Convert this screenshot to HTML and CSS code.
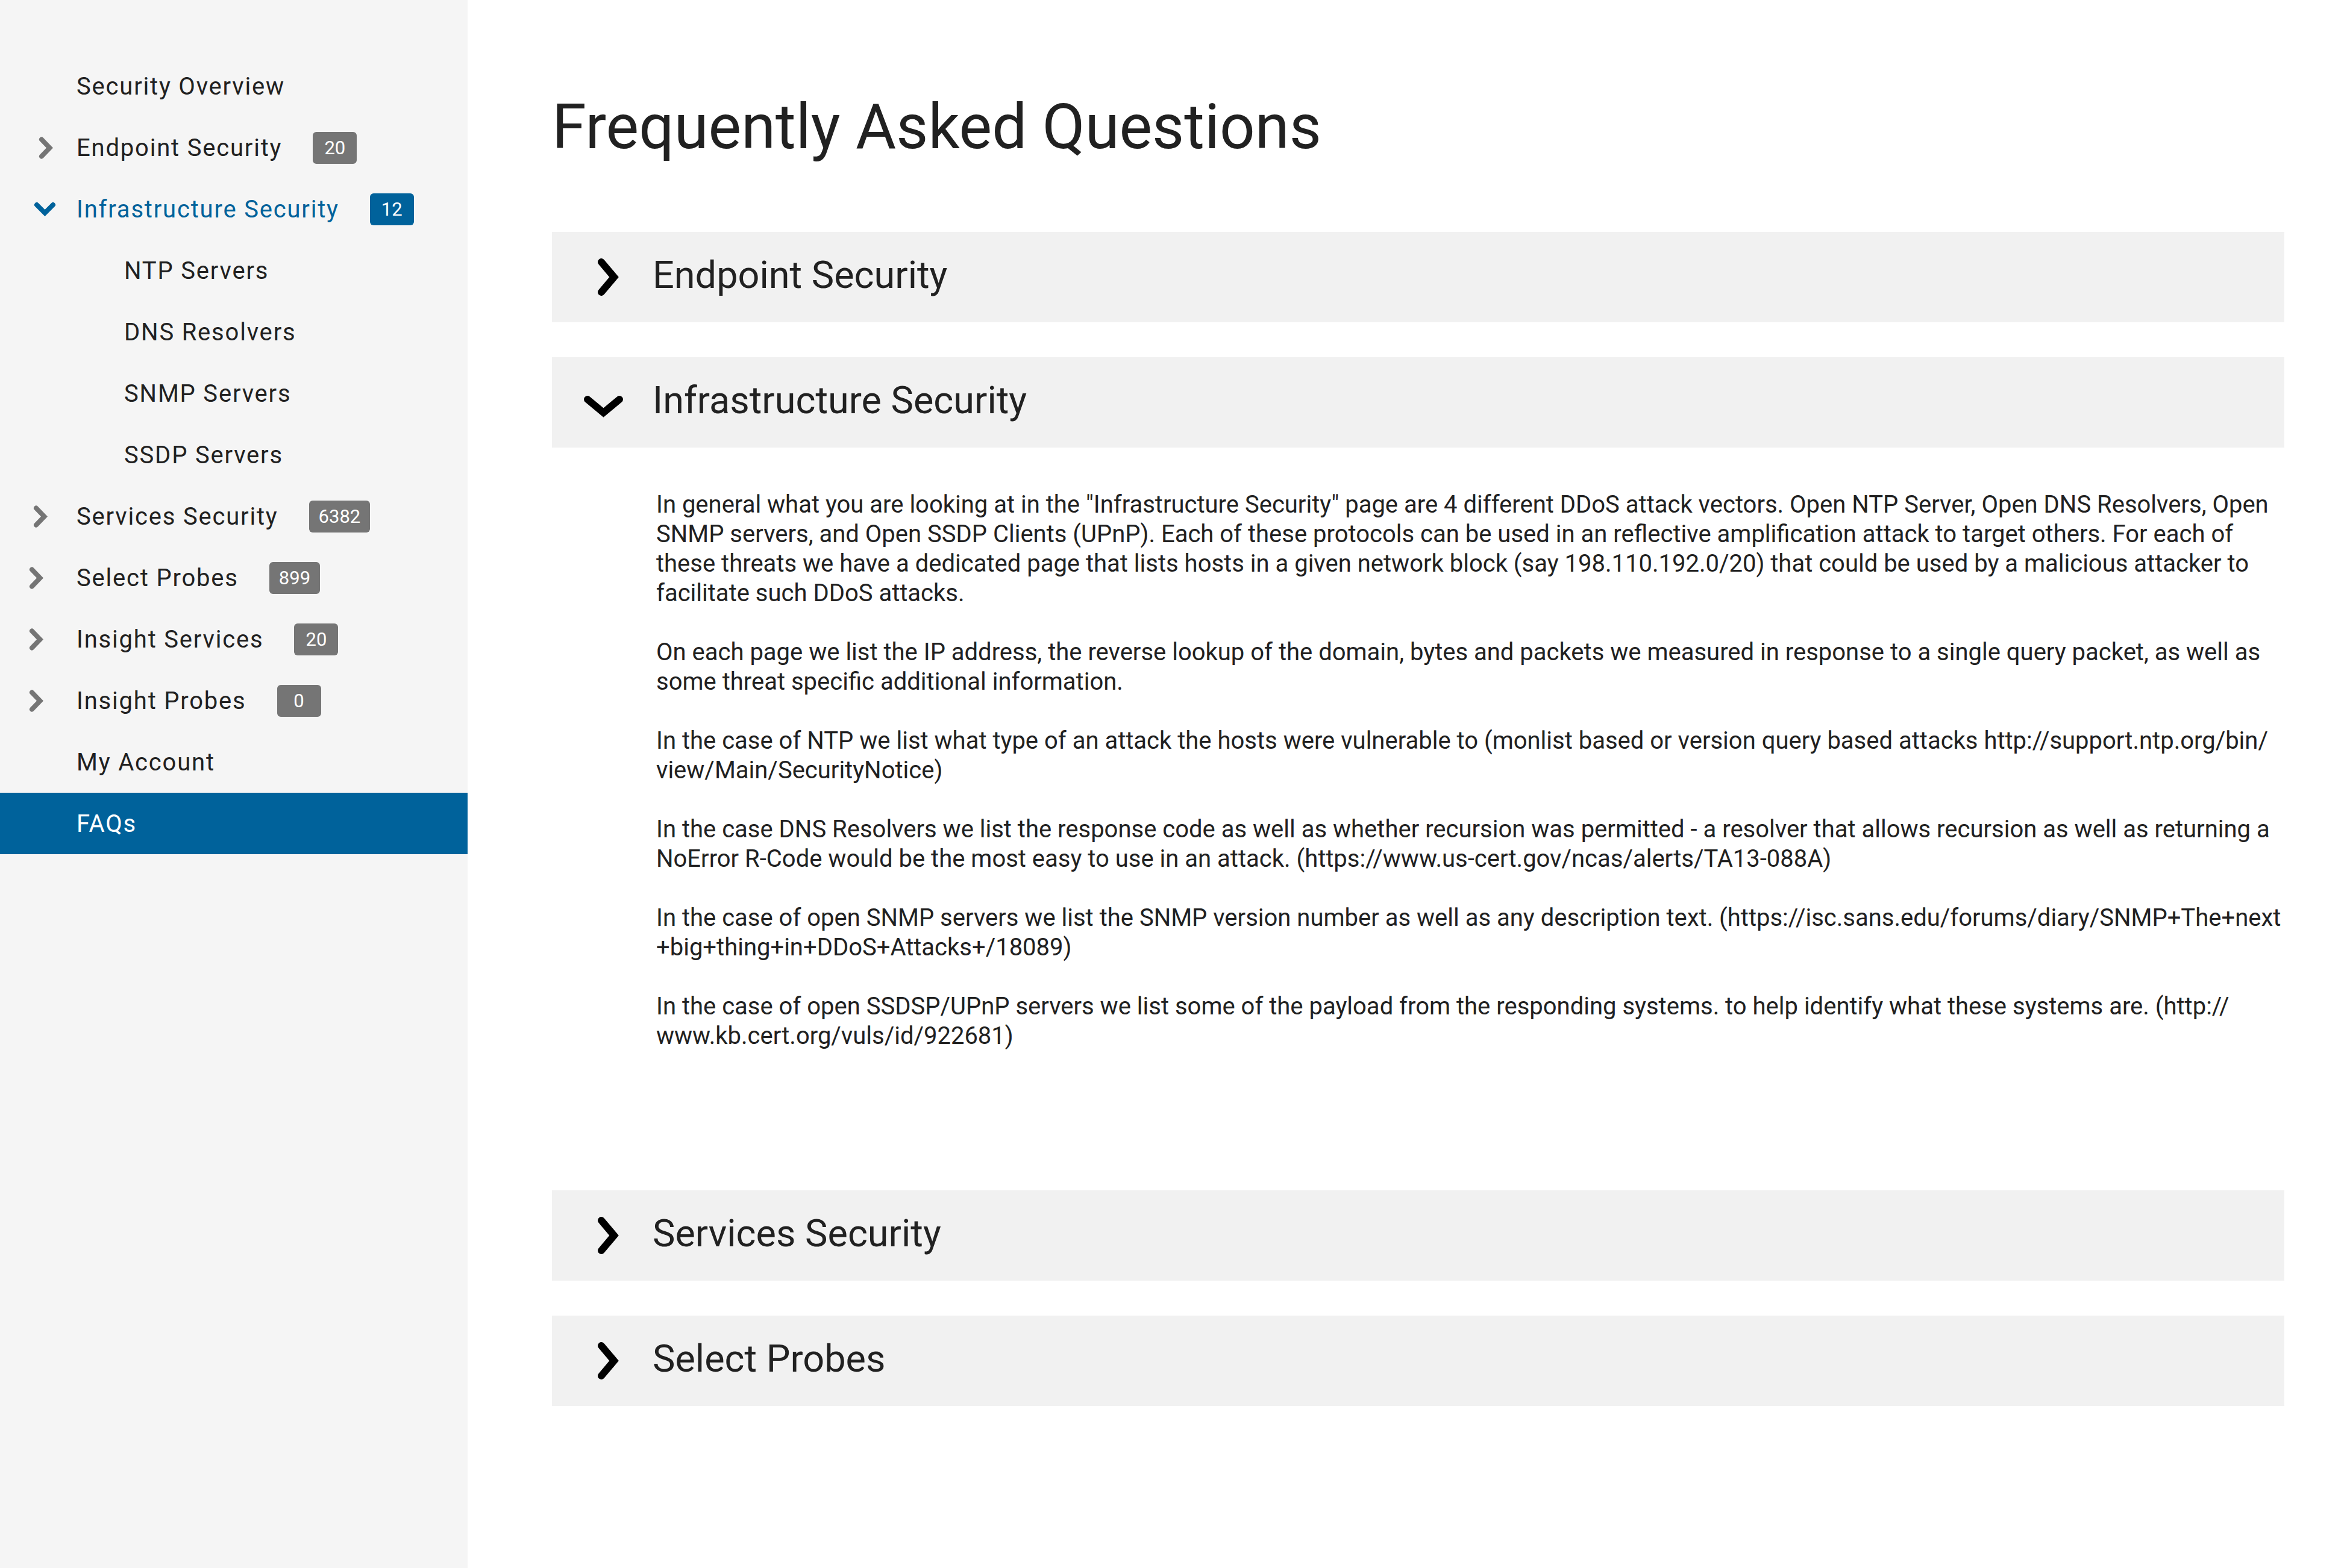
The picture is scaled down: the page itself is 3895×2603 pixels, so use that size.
FILE: index.html
```html
<!DOCTYPE html>
<html lang="en">
<head>
<meta charset="utf-8">
<title>Frequently Asked Questions</title>
<link rel="stylesheet" href="styles.css">
</head>
<body>
<div class="layout">
  <nav class="sidebar">
    <ul class="nav">
      <li class="nav-item"><span class="slot"></span><span class="label">Security Overview</span></li>
      <li class="nav-item"><span class="slot"><svg class="chev chev-a" width="25" height="37" viewBox="0 0 25 37"><polyline points="6,4.5 19.5,18.5 6,32.5"/></svg></span><span class="label">Endpoint Security</span><span class="badge">20</span></li>
      <li class="nav-item is-open"><span class="slot"><svg class="chev-down" width="37" height="24" viewBox="0 0 37 24"><polyline points="5,5 18.5,18.5 32,5"/></svg></span><span class="label">Infrastructure Security</span><span class="badge badge-blue">12</span></li>
      <li class="nav-item sub"><span class="slot"></span><span class="label">NTP Servers</span></li>
      <li class="nav-item sub"><span class="slot"></span><span class="label">DNS Resolvers</span></li>
      <li class="nav-item sub"><span class="slot"></span><span class="label">SNMP Servers</span></li>
      <li class="nav-item sub"><span class="slot"></span><span class="label">SSDP Servers</span></li>
      <li class="nav-item"><span class="slot"><svg class="chev chev-b" width="25" height="37" viewBox="0 0 25 37"><polyline points="6,4.5 19.5,18.5 6,32.5"/></svg></span><span class="label">Services Security</span><span class="badge">6382</span></li>
      <li class="nav-item"><span class="slot"><svg class="chev chev-c" width="25" height="37" viewBox="0 0 25 37"><polyline points="6,4.5 19.5,18.5 6,32.5"/></svg></span><span class="label">Select Probes</span><span class="badge">899</span></li>
      <li class="nav-item"><span class="slot"><svg class="chev chev-c" width="25" height="37" viewBox="0 0 25 37"><polyline points="6,4.5 19.5,18.5 6,32.5"/></svg></span><span class="label">Insight Services</span><span class="badge">20</span></li>
      <li class="nav-item"><span class="slot"><svg class="chev chev-c" width="25" height="37" viewBox="0 0 25 37"><polyline points="6,4.5 19.5,18.5 6,32.5"/></svg></span><span class="label">Insight Probes</span><span class="badge">0</span></li>
      <li class="nav-item"><span class="slot"></span><span class="label">My Account</span></li>
      <li class="nav-item current"><span class="slot"></span><span class="label">FAQs</span></li>
    </ul>
  </nav>

  <main class="main">
    <h1 class="title">Frequently Asked Questions</h1>
    <div class="faq">
      <div class="faq-item">
        <div class="faq-head">
          <span class="faq-icon"><svg width="70" height="70" viewBox="0 0 70 70"><polyline points="32,10 53,35 32,60"/></svg></span>
          <span class="faq-title">Endpoint Security</span>
        </div>
      </div>
      <div class="faq-item">
        <div class="faq-head">
          <span class="faq-icon"><svg width="70" height="70" viewBox="0 0 70 70"><polyline points="9,30 35.5,52 62,30"/></svg></span>
          <span class="faq-title">Infrastructure Security</span>
        </div>
        <div class="faq-body">
          <p>In general what you are looking at in the "Infrastructure Security" page are 4 different DDoS attack vectors. Open NTP Server, Open DNS Resolvers, Open SNMP servers, and Open SSDP Clients (UPnP). Each of these protocols can be used in an reflective amplification attack to target others. For each of these threats we have a dedicated page that lists hosts in a given network block (say 198.110.192.0/20) that could be used by a malicious attacker to facilitate such DDoS attacks.</p>
          <p>On each page we list the IP address, the reverse lookup of the domain, bytes and packets we measured in response to a single query packet, as well as some threat specific additional information.</p>
          <p>In the case of NTP we list what type of an attack the hosts were vulnerable to (monlist based or version query based attacks http://support.ntp.org/bin/<wbr>view/Main/SecurityNotice)</p>
          <p>In the case DNS Resolvers we list the response code as well as whether recursion was permitted - a resolver that allows recursion as well as returning a NoError R-Code would be the most easy to use in an attack. (https://www.us-cert.gov/ncas/alerts/TA13-088A)</p>
          <p>In the case of open SNMP servers we list the SNMP version number as well as any description text. (https://isc.sans.edu/forums/diary/SNMP+The+next<wbr>+big+thing+in+DDoS+Attacks+/18089)</p>
          <p>In the case of open SSDSP/UPnP servers we list some of the payload from the responding systems. to help identify what these systems are. (http://<wbr>www.kb.cert.org/vuls/id/922681)</p>
        </div>
      </div>
      <div class="faq-item">
        <div class="faq-head">
          <span class="faq-icon"><svg width="70" height="70" viewBox="0 0 70 70"><polyline points="32,10 53,35 32,60"/></svg></span>
          <span class="faq-title">Services Security</span>
        </div>
      </div>
      <div class="faq-item">
        <div class="faq-head">
          <span class="faq-icon"><svg width="70" height="70" viewBox="0 0 70 70"><polyline points="32,10 53,35 32,60"/></svg></span>
          <span class="faq-title">Select Probes</span>
        </div>
      </div>
    </div>
  </main>
</div>
</body>
</html>
```

FILE: styles.css
```css
html, body {
  margin: 0;
  padding: 0;
}

body {
  font-family: Roboto, "Noto Sans", "Liberation Sans", sans-serif;
  color: #212121;
  background: #ffffff;
}

.layout {
  display: flex;
  min-height: 2603px;
}

/* ---------- Sidebar ---------- */
.sidebar {
  width: 776px;
  flex: none;
  background: #f5f5f5;
  padding-top: 92px;
}

.nav {
  list-style: none;
  margin: 0;
  padding: 0;
}

.nav-item {
  display: flex;
  align-items: center;
  height: 102px;
  font-size: 40px;
  letter-spacing: 1.8px;
  color: #212121;
  white-space: nowrap;
}

.slot {
  width: 127px;
  flex: none;
  display: flex;
  align-items: center;
}

.nav-item.sub .slot {
  width: 206px;
}

.nav-item.is-open {
  color: #00629b;
}

.nav-item.current {
  background: #00629b;
  color: #ffffff;
}

.chev polyline {
  fill: none;
  stroke: #757575;
  stroke-width: 8;
  stroke-linecap: round;
  stroke-linejoin: miter;
}

.chev-a { margin-left: 63px; }
.chev-b { margin-left: 54px; }
.chev-c { margin-left: 47px; }

.chev-down {
  margin-left: 56px;
}

.chev-down polyline {
  fill: none;
  stroke: #00629b;
  stroke-width: 8;
  stroke-linecap: round;
  stroke-linejoin: miter;
}

.badge {
  margin-left: 51px;
  min-width: 73px;
  height: 53px;
  box-sizing: border-box;
  padding: 0 16px;
  border-radius: 6px;
  background: #757575;
  color: #ffffff;
  font-size: 31px;
  letter-spacing: 0;
  display: flex;
  align-items: center;
  justify-content: center;
}

.badge-blue {
  background: #00629b;
}

/* ---------- Main ---------- */
.main {
  flex: 1;
  min-width: 0;
  padding: 148px 104px 0 140px;
}

.title {
  margin: 0 0 112px 0;
  font-size: 103px;
  font-weight: 400;
  line-height: 125px;
  color: #212121;
}

.faq {
  display: flex;
  flex-direction: column;
  gap: 58px;
}

.faq-head {
  display: flex;
  align-items: center;
  height: 150px;
  box-sizing: border-box;
  padding-left: 50px;
  padding-bottom: 8px;
  background: #f1f1f1;
}

.faq-icon {
  width: 70px;
  height: 70px;
  flex: none;
  margin-top: 8px;
}

.faq-icon svg {
  display: block;
}

.faq-icon polyline {
  fill: none;
  stroke: #000000;
  stroke-width: 12;
  stroke-linecap: round;
  stroke-linejoin: miter;
}

.faq-title {
  margin-left: 47px;
  font-size: 63px;
  font-weight: 400;
  color: #212121;
}

.faq-body {
  padding: 70px 0 174px 173px;
  font-size: 40px;
  line-height: 49px;
  color: #212121;
}

.faq-body p {
  margin: 0 0 49px;
}

.faq-body p:last-child {
  margin-bottom: 0;
}
```
